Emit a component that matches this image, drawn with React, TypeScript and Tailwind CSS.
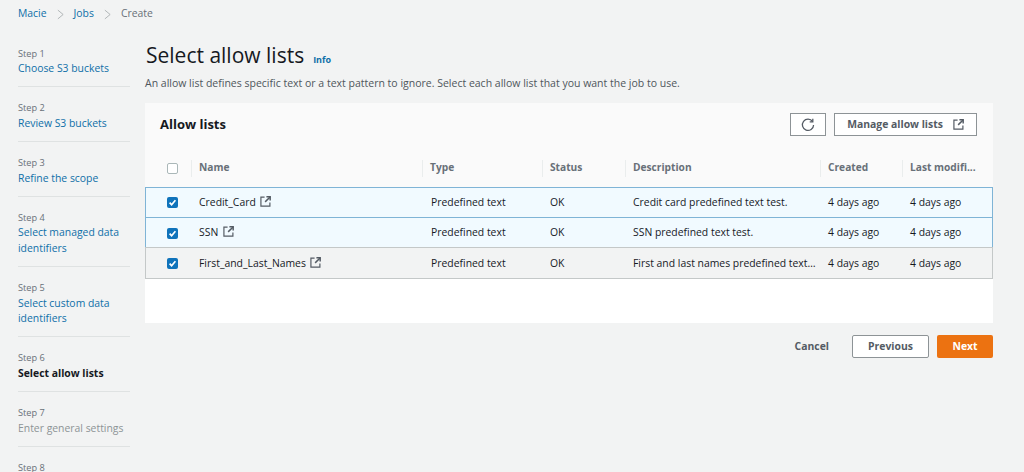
import React from "react";

const gridCols = "grid grid-cols-[46px_231px_120px_83px_195px_82px_91px] items-center";

const steps = [
  { step: "Step 1", lines: ["Choose S3 buckets"], state: "link" },
  { step: "Step 2", lines: ["Review S3 buckets"], state: "link" },
  { step: "Step 3", lines: ["Refine the scope"], state: "link" },
  { step: "Step 4", lines: ["Select managed data", "identifiers"], state: "link" },
  { step: "Step 5", lines: ["Select custom data", "identifiers"], state: "link" },
  { step: "Step 6", lines: ["Select allow lists"], state: "active" },
  { step: "Step 7", lines: ["Enter general settings"], state: "disabled" },
];

const rows = [
  {
    name: "Credit_Card",
    desc: "Credit card predefined text test.",
    cls: "bg-[#f1faff] border-[#7fb4d6] h-[31px]",
  },
  {
    name: "SSN",
    desc: "SSN predefined text test.",
    cls: "bg-[#f1faff] border-[#7fb4d6] h-[31px] -mt-px pt-px",
  },
  {
    name: "First_and_Last_Names",
    desc: "First and last names predefined text…",
    cls: "bg-[#f2f3f3] border-[#c4c8c8] h-[32px] -mt-px pt-px",
  },
];

const headers = ["Name", "Type", "Status", "Description", "Created", "Last modifi..."];

const ExternalIcon = ({ className }: { className: string }) => (
  <svg viewBox="0 0 12 12" fill="none" stroke="currentColor" strokeWidth="1.3" className={className}>
    <path d="M5 1.2H1v9.8h9.8V7" />
    <path d="M7 .9h4.1V5" strokeWidth="1.6" />
    <path d="M11 1 5.6 6.4" strokeWidth="1.6" />
  </svg>
);

const Chevron = () => (
  <svg viewBox="0 0 8 12" fill="none" stroke="#a9aeb0" className="mx-[10px] h-[11px] w-[7px]">
    <path d="M1 1l6 5-6 5" />
  </svg>
);

const Check = () => (
  <span className="flex h-[11px] w-[11px] items-center justify-center rounded-[2px] bg-[#0f73bb]">
    <svg viewBox="0 0 11 11" fill="none" stroke="white" strokeWidth="1.7" className="h-[11px] w-[11px]">
      <path d="M2.6 5.7 4.6 7.7 8.4 3.3" />
    </svg>
  </span>
);

export default function App() {
  return (
    <div className="h-[472px] w-[1024px] overflow-hidden bg-[#f2f3f3] font-['Open_Sans',sans-serif] text-[10.4px] text-[#16191f]">
      <div className="flex h-[28px] items-center pl-[18px] text-[#0f6fa8]">
        <span>Macie</span>
        <Chevron />
        <span>Jobs</span>
        <Chevron />
        <span className="text-[#687078]">Create</span>
      </div>

      <div className="flex pl-[18px]">
        <nav className="w-[112px] shrink-0 pt-[17.5px]">
          {steps.map((s) => (
            <div key={s.step} className="mb-[13px] border-b border-[#dfe2e2] pb-[10.5px] leading-[15.2px]">
              <div className="text-[9.2px] text-[#687078]">{s.step}</div>
              {s.lines.map((l) => (
                <div
                  key={l}
                  className={
                    s.state === "link"
                      ? "text-[#0f6fa8]"
                      : s.state === "active"
                        ? "font-bold text-[#16191f]"
                        : "text-[#8d9396]"
                  }
                >
                  {l}
                </div>
              ))}
            </div>
          ))}
          <div className="text-[9.2px] leading-[15px] text-[#687078]">Step 8</div>
        </nav>

        <main className="ml-[15px] w-[848px] shrink-0">
          <div className="mt-[10px] flex h-[33px] items-center pt-[1px]">
            <h1 className="ml-px text-[21px] leading-[30px] font-normal text-[#16191f]">Select allow lists</h1>
            <span className="mt-[10px] ml-[9px] text-[9px] font-bold text-[#0f6fa8]">Info</span>
          </div>
          <p className="mt-[5px] text-[10.5px] leading-[15px] text-[#4f565c]">
            An allow list defines specific text or a text pattern to ignore. Select each allow list that you want the job to use.
          </p>

          <section className="mt-[12px] h-[220px] bg-white">
            <div className="flex h-[45px] items-center justify-between bg-[#fafafa] pr-[16px] pb-[2px] pl-[15px]">
              <h2 className="text-[13px] font-bold">Allow lists</h2>
              <div className="flex items-center gap-[8px]">
                <button className="flex h-[23px] w-[36px] items-center justify-center border border-[#8d9396] bg-white text-[#545b64]">
                  <svg viewBox="0 0 14 14" fill="none" stroke="currentColor" strokeWidth="1.3" className="h-[14px] w-[14px]">
                    <path d="M11.6 3.6A5.6 5.6 0 1 0 12.6 7" />
                    <path d="M11.8 0.8v3.1H8.7" />
                  </svg>
                </button>
                <button className="flex h-[23px] w-[143px] items-center justify-center gap-[10px] border border-[#8d9396] bg-white text-[10.4px] font-bold text-[#545b64]">
                  Manage allow lists
                  <ExternalIcon className="h-[11px] w-[11px]" />
                </button>
              </div>
            </div>

            <div className={`${gridCols} h-[39px] bg-[#fafafa] pt-[1px] text-[10.2px] font-bold text-[#687078]`}>
              <div className="flex justify-center pl-[8px]">
                <span className="h-[11px] w-[11px] rounded-[2px] border border-[#aab7b8] bg-white" />
              </div>
              {headers.map((h) => (
                <div key={h} className="flex h-[17px] items-center border-l border-[#eaeded] pl-[7px] whitespace-nowrap">
                  {h}
                </div>
              ))}
            </div>

            {rows.map((r) => (
              <div key={r.name} className={`${gridCols} relative box-border border ${r.cls} text-[10.4px]`}>
                <div className="flex justify-center pl-[7px]">
                  <Check />
                </div>
                <div className="flex items-center gap-[4.5px] pl-[7px]">
                  {r.name}
                  <ExternalIcon className="-mt-[2px] h-[11px] w-[11px] text-[#545b64]" />
                </div>
                <div className="pl-[8px] whitespace-nowrap">Predefined text</div>
                <div className="pl-[7px]">OK</div>
                <div className="pl-[7px] whitespace-nowrap">{r.desc}</div>
                <div className="pl-[7px] whitespace-nowrap">4 days ago</div>
                <div className="pl-[7px] whitespace-nowrap">4 days ago</div>
              </div>
            ))}
          </section>

          <div className="mt-[12px] flex items-center justify-end text-[10.4px] font-bold">
            <span className="mr-[23px] text-[#545b64]">Cancel</span>
            <button className="h-[23px] w-[77px] rounded-[2px] border border-[#8d9396] bg-white text-[#545b64]">Previous</button>
            <button className="ml-[8px] h-[23px] w-[56px] rounded-[2px] bg-[#ec7211] text-white">Next</button>
          </div>
        </main>
      </div>
    </div>
  );
}
